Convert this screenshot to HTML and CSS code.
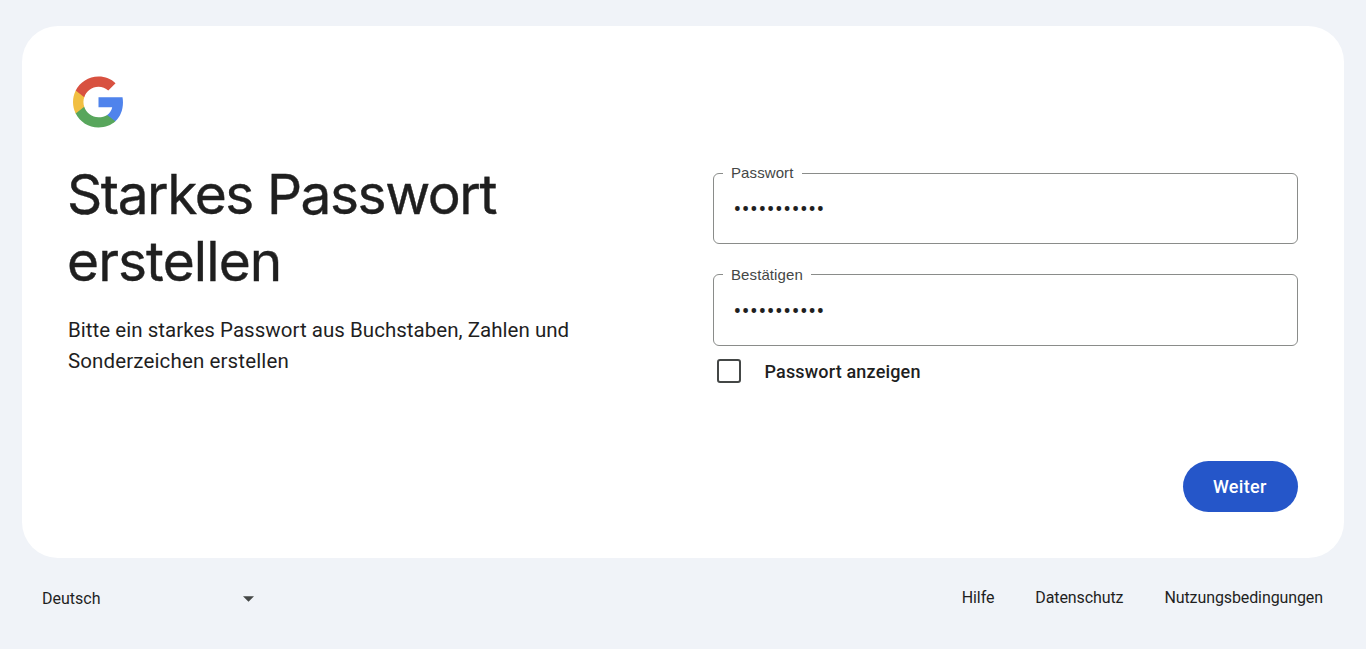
FILE: index.html
```html
<!DOCTYPE html>
<html lang="de">
<head>
    <meta charset="UTF-8">
    <meta name="viewport" content="width=device-width, initial-scale=1.0">
    <title>Starkes Passwort erstellen</title>
    <link rel="stylesheet" href="styles.css">
</head>
<body>
    <main class="card">
        <svg class="logo" viewBox="2 2 44 44" aria-label="Google">
            <path fill="#4f83ec" d="M45.12 24.5c0-1.56-.14-3.06-.4-4.5H24v8.51h11.84c-.51 2.75-2.06 5.08-4.39 6.64v5.52h7.11c4.16-3.83 6.56-9.47 6.56-16.17z"/>
            <path fill="#58a65c" d="M24 46c5.94 0 10.92-1.97 14.56-5.33l-7.11-5.52c-1.97 1.32-4.49 2.1-7.45 2.1-5.73 0-10.58-3.87-12.31-9.07H4.34v5.7C7.96 41.07 15.4 46 24 46z"/>
            <path fill="#f1bf42" d="M11.69 28.18C11.25 26.86 11 25.45 11 24s.25-2.86.69-4.18v-5.7H4.34C2.85 17.09 2 20.45 2 24c0 3.55.85 6.91 2.34 9.88l7.35-5.7z"/>
            <path fill="#d85140" d="M24 10.75c3.23 0 6.13 1.11 8.41 3.29l6.31-6.31C34.91 4.18 29.93 2 24 2 15.4 2 7.96 6.93 4.34 14.12l7.35 5.7c1.73-5.2 6.58-9.07 12.31-9.07z"/>
        </svg>
        <div class="content">
            <div class="intro">
                <h1>Starkes Passwort<br><span class="second">erstellen</span></h1>
                <p>Bitte ein starkes Passwort aus Buchstaben, Zahlen und<br><span class="second">Sonderzeichen erstellen</span></p>
            </div>
            <form class="form">
                <fieldset class="field">
                    <legend>Passwort</legend>
                    <input type="password" value="abcdefghijk" aria-label="Passwort">
                </fieldset>
                <fieldset class="field">
                    <legend>Bestätigen</legend>
                    <input type="password" value="abcdefghijk" aria-label="Bestätigen">
                </fieldset>
                <label class="show">
                    <input type="checkbox">
                    <span>Passwort anzeigen</span>
                </label>
                <button type="button" class="next">Weiter</button>
            </form>
        </div>
    </main>
    <footer class="footer">
        <div class="language">
            <span>Deutsch</span>
            <svg class="arrow" viewBox="0 0 10 5"><path d="M0 0h10L5 5z"/></svg>
        </div>
        <nav class="links">
            <a href="#">Hilfe</a>
            <a href="#">Datenschutz</a>
            <a href="#">Nutzungsbedingungen</a>
        </nav>
    </footer>
</body>
</html>
```
FILE: styles.css
```css
* {
    box-sizing: border-box;
}
body {
    margin: 0;
    padding: 26px 22px 0;
    height: 649px;
    overflow: hidden;
    background-color: #f0f3f8;
    color: #1f1f1f;
    font-family: Roboto, sans-serif;
}
.card {
    height: 532px;
    padding: 50px 46px 0;
    background-color: #fff;
    border-radius: 36px;
}
.logo {
    display: block;
    width: 51px;
    height: 52px;
    margin-left: 5px;
}
.content {
    display: grid;
    grid-template-columns: 1fr 585px;
}
.intro {
    padding-top: 33px;
    white-space: nowrap;
}
h1 {
    margin: 0 0 0 -1px;
    font-family: Inter, sans-serif;
    font-size: 55px;
    font-weight: 400;
    line-height: 67px;
    letter-spacing: -1.45px;
    -webkit-text-stroke: 0.4px #1f1f1f;
}
h1 .second {
    letter-spacing: -0.9px;
}
p {
    margin: 20px 0 0;
    font-size: 20.5px;
    line-height: 31px;
    letter-spacing: 0.03px;
}
p .second {
    letter-spacing: 0.13px;
}
.form {
    padding-top: 36px;
}
.field {
    height: 80px;
    margin: 0 0 21.5px;
    padding: 0 20px 0 9px;
    border: 1px solid #8a8c8a;
    border-radius: 6px;
}
.field legend {
    padding: 0 8px;
    font-family: "Liberation Sans", Arial, sans-serif;
    font-size: 15px;
    line-height: 18px;
    letter-spacing: 0.1px;
    color: #444746;
}
.field input {
    display: block;
    width: 100%;
    height: 36px;
    margin: 9.5px 0 0;
    padding: 0 0 0 10.5px;
    border: none;
    outline: none;
    font-family: Roboto, sans-serif;
    font-size: 23px;
    letter-spacing: 0.55px;
    color: #1f1f1f;
}
.show {
    display: flex;
    align-items: center;
    gap: 23.5px;
    height: 24px;
    margin: -8px 0 0 4px;
    font-size: 18px;
    font-weight: 500;
    letter-spacing: 0.17px;
}
.show input {
    appearance: none;
    width: 24px;
    height: 24px;
    margin: 0;
    border: 2px solid #444746;
    border-radius: 3px;
}
.next {
    display: block;
    width: 115.5px;
    height: 51px;
    margin: 78px 0 0 auto;
    padding: 0 7px 0 6px;
    border: none;
    border-radius: 26px;
    background-color: #2556c9;
    color: #fff;
    font-family: Roboto, sans-serif;
    font-size: 18px;
    font-weight: 500;
    letter-spacing: 0.3px;
}
.footer {
    display: flex;
    justify-content: space-between;
    padding: 28px 21px 0 20px;
    font-size: 16px;
    line-height: 24px;
}
.language {
    display: flex;
    justify-content: space-between;
    align-items: center;
    width: 212px;
    padding-top: 1px;
}
.arrow {
    width: 11px;
    height: 6px;
    fill: #444746;
}
.links {
    display: flex;
    gap: 41px;
    letter-spacing: -0.1px;
}
.links a {
    color: #1f1f1f;
    text-decoration: none;
}
```
